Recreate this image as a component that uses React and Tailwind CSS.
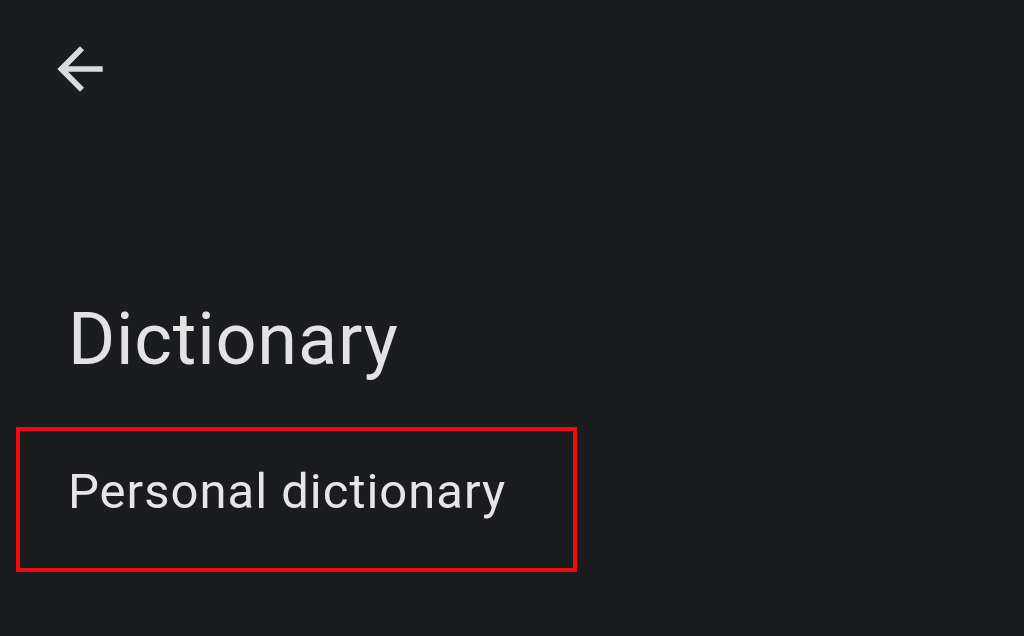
import React from 'react';

function BackArrow() {
  return (
    <svg viewBox="0 0 24 24" className="w-[68px] h-[68px]" fill="#d9dbde">
      <path d="M20 11H7.83l5.59-5.59L12 4l-8 8 8 8 1.41-1.41L7.83 13H20v-2z" />
    </svg>
  );
}

export default function App() {
  return (
    <div
      className="w-[1024px] h-[636px] bg-[#1b1c1f] flex flex-col overflow-hidden"
      style={{ fontFamily: 'Roboto, "Open Sans", sans-serif' }}
    >
      {/* top bar */}
      <div className="pl-[46px] pt-[35px]">
        <BackArrow />
      </div>

      <h1 className="mt-[201px] pl-[68px] text-[72px] leading-none tracking-[0.8px] text-[#e3e3e3] font-normal">
        Dictionary
      </h1>

      <div className="mt-[51px] ml-[16px] w-[561px] h-[145px] border-4 border-[#f00c0c] pl-[48px] pt-[36px]">
        <span className="block text-[49px] leading-none tracking-[1px] text-[#e6e6e6]">Personal dictionary</span>
      </div>
    </div>
  );
}
